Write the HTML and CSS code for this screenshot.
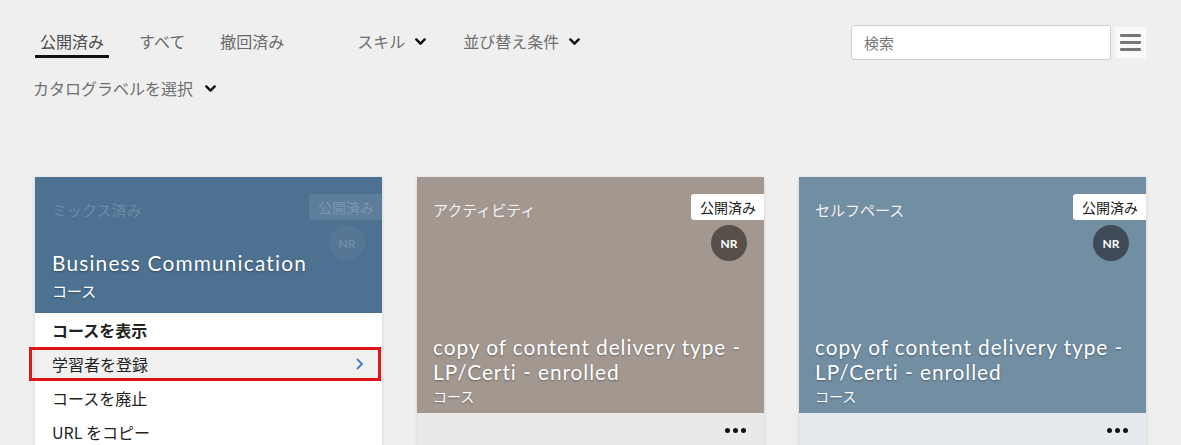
FILE: index.html
```html
<!DOCTYPE html>
<html lang="ja">
<head>
<meta charset="utf-8">
<title>カタログ</title>
<link rel="stylesheet" href="styles.css">
</head>
<body>
<div class="page">
  <div class="toolbar">
    <div class="row1">
      <div class="filters">
        <div class="tabs">
          <span class="tab active">公開済み</span>
          <span class="tab">すべて</span>
          <span class="tab">撤回済み</span>
        </div>
        <div class="dropdowns">
          <span class="dd">スキル <svg class="chev" viewBox="0 0 10 7" width="11" height="8"><path d="M1.2 1.2 L5 5 L8.8 1.2" fill="none" stroke="#111" stroke-width="2.2" stroke-linecap="round" stroke-linejoin="round"/></svg></span>
          <span class="dd">並び替え条件 <svg class="chev" viewBox="0 0 10 7" width="11" height="8"><path d="M1.2 1.2 L5 5 L8.8 1.2" fill="none" stroke="#111" stroke-width="2.2" stroke-linecap="round" stroke-linejoin="round"/></svg></span>
        </div>
      </div>
      <div class="search">
        <div class="search-box">検索</div>
        <div class="menu-btn"><span></span><span></span><span></span></div>
      </div>
    </div>
    <div class="row2">
      <span class="dd">カタログラベルを選択 <svg class="chev" viewBox="0 0 10 7" width="11" height="8"><path d="M1.2 1.2 L5 5 L8.8 1.2" fill="none" stroke="#111" stroke-width="2.2" stroke-linecap="round" stroke-linejoin="round"/></svg></span>
    </div>
  </div>

  <div class="cards">
    <div class="card card-mixed">
      <div class="card-head head-short">
        <div class="label faded">ミックス済み</div>
        <div class="badge faded-badge">公開済み</div>
        <div class="avatar faded-avatar">NR</div>
        <div class="title-block tb-1">
          <div class="title">Business Communication</div>
          <div class="kind">コース</div>
        </div>
      </div>
      <ul class="menu">
        <li class="menu-item bold">コースを表示</li>
        <li class="menu-item hover">学習者を登録<svg class="right" viewBox="0 0 8 12" width="8" height="12"><path d="M1.5 1.5 L6 6 L1.5 10.5" fill="none" stroke="#3f7cc4" stroke-width="1.8" stroke-linecap="round"/></svg></li>
        <li class="menu-item">コースを廃止</li>
        <li class="menu-item">URL をコピー</li>
      </ul>
    </div>

    <div class="card card-activity">
      <div class="card-head">
        <div class="label">アクティビティ</div>
        <div class="badge">公開済み</div>
        <div class="avatar av-brown">NR</div>
        <div class="title-block">
          <div class="title">copy of content delivery type -<br>LP/Certi - enrolled</div>
          <div class="kind">コース</div>
        </div>
      </div>
      <div class="card-foot"><span class="dots"><i></i><i></i><i></i></span></div>
    </div>

    <div class="card card-self">
      <div class="card-head">
        <div class="label">セルフペース</div>
        <div class="badge">公開済み</div>
        <div class="avatar av-slate">NR</div>
        <div class="title-block">
          <div class="title">copy of content delivery type -<br>LP/Certi - enrolled</div>
          <div class="kind">コース</div>
        </div>
      </div>
      <div class="card-foot"><span class="dots"><i></i><i></i><i></i></span></div>
    </div>
  </div>
</div>
</body>
</html>
```

FILE: styles.css
```css
* { box-sizing: border-box; }
html, body { margin: 0; padding: 0; }
body {
  background: #efefef;
  font-family: "Noto Sans CJK JP", "Noto Sans", sans-serif;
  color: #333;
  overflow: hidden;
}
.page { width: 1181px; }

.toolbar { padding: 25px 35px 0 33px; }
.row1 { display: flex; justify-content: space-between; align-items: flex-start; }
.filters { display: flex; align-items: center; padding-top: 5px; }
.tabs { display: flex; gap: 25px; }
.tab {
  font-size: 16px; line-height: 22px; color: #6a6a6a;
  padding: 0 5px 3px; border-bottom: 3px solid transparent;
}
.tab.active { color: #4a4a4a; border-bottom-color: #111; margin-left: 2px; }
.dropdowns { display: flex; gap: 37px; margin-left: 68px; margin-top: -6px; }
.dd { font-size: 16px; line-height: 22px; color: #6f6f6f; display: inline-flex; align-items: center; }
.chev { margin-left: 10px; margin-top: 2px; }

.search { display: flex; align-items: flex-start; gap: 4px; margin-right: 0; }
.search-box {
  width: 260px; height: 35px; background: #fff;
  border: 1px solid #cfcfcf; border-radius: 3px;
  font-size: 15px; line-height: 33px; color: #777; padding-left: 12px;
}
.menu-btn {
  width: 31px; height: 31px; margin-top: 2px; background: #fafafa;
  display: flex; flex-direction: column; justify-content: center; align-items: center; gap: 4px;
}
.menu-btn span { display: block; width: 21px; height: 3px; background: #777; border-radius: 1px; }

.row2 { margin-top: 16px; }
.row2 .chev { margin-left: 12px; }

.cards { display: flex; gap: 35px; padding: 77px 0 0 35px; }
.card {
  width: 347px; background: #fff;
  box-shadow: 0 1px 4px rgba(0,0,0,0.13);
  display: flex; flex-direction: column;
}
.card-head {
  position: relative; height: 236px;
  padding: 23px 16px 7px;
  display: flex; flex-direction: column;
  color: #fff;
}
.head-short { height: 136px; padding: 23px 17px 12px; }
.card-activity .card-head { background: #a29890; }
.card-self .card-head { background: #718ea3; }
.card-mixed .card-head { background: #4d7191; }

.label { font-size: 15px; line-height: 20px; color: #f3f0ec; }
.label.faded { color: #6c8ba6; }

.badge {
  position: absolute; top: 17px; right: 0;
  background: #fff; color: #222;
  font-size: 14px; line-height: 26px; height: 26px;
  padding: 0 8px 0 9px; border-radius: 3px 0 0 3px;
}
.faded-badge { background: #5c7e9b; color: #7b97b0; }

.avatar {
  position: absolute; top: 48px; right: 17px;
  width: 36px; height: 36px; border-radius: 50%;
  font-family: "Lato", "Noto Sans", sans-serif; font-weight: 700; font-size: 12px;
  display: flex; align-items: center; justify-content: center; color: #fff;
}
.av-brown { background: #584f49; }
.av-slate { background: #3e4b57; }
.faded-avatar { background: #557795; color: #6f8dab; }

.title-block { margin-top: auto; }
.title {
  font-family: "Lato", "Noto Sans", sans-serif;
  font-size: 20.8px; line-height: 25px; letter-spacing: 0.95px; color: #fff;
  text-shadow: 0 1px 2px rgba(0,0,0,0.35);
  margin-bottom: 2px; white-space: nowrap;
}
.kind { font-size: 14px; line-height: 20px; color: #fff; text-shadow: 0 1px 2px rgba(0,0,0,0.3); }
.tb-1 .title { line-height: 26px; margin-bottom: 5px; letter-spacing: 1.2px; }
.tb-1 .kind { font-size: 15px; }

.card-foot { height: 40px; display: flex; justify-content: flex-end; align-items: flex-start; padding: 15px 18px 0 0; }
.card-activity .card-foot { background: #ebe9e7; }
.card-self .card-foot { background: #e6eaee; }
.dots { display: flex; gap: 3px; }
.dots i { display: block; width: 5px; height: 5px; border-radius: 50%; background: #111; }

.menu { list-style: none; margin: 0; padding: 0; background: #fff; }
.menu-item {
  position: relative;
  height: 34.3px; padding: 0 17px;
  font-size: 16px; line-height: 34px; color: #222;
  display: flex; align-items: center; justify-content: space-between;
}
.menu-item.bold { font-weight: 700; height: 33.5px; }
.menu-item.hover { background: #f0f0f0; }
.menu-item.hover::after {
  content: ""; position: absolute; left: -6px; right: 1px; top: 0; bottom: 0;
  border: 3px solid #e01616;
}
.right { margin-right: 1px; }
```
